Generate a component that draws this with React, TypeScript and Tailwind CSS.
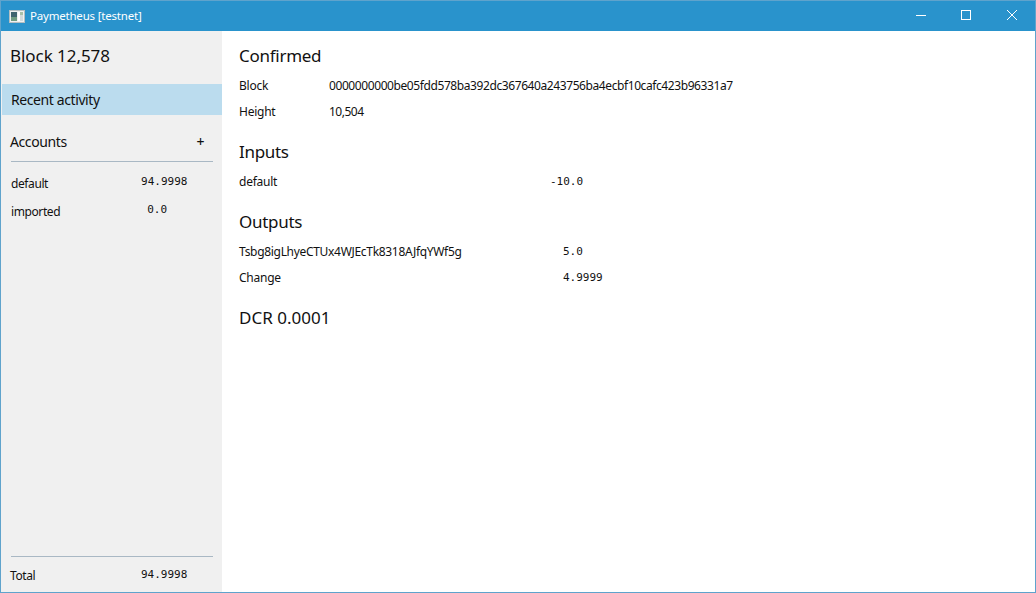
const sans = "font-['Noto_Sans',sans-serif]";
const mono = "font-['DejaVu_Sans_Mono',monospace] text-[11px] leading-[16px] text-[#111]";

const Row = ({ label, children }: { label: string; children: React.ReactNode }) => (
  <div className="flex h-[26px] items-center">
    <span className="w-[90px] shrink-0 text-[12px] tracking-[-0.25px]">{label}</span>
    {children}
  </div>
);

const AmountRow = ({ label, amount, amountClass }: { label: string; amount: string; amountClass: string }) => (
  <div className="flex h-[26px] items-center">
    <span className="text-[12px] tracking-[-0.4px]">{label}</span>
    <span className={`${mono} mb-[4px] ${amountClass}`}>{amount}</span>
  </div>
);

const App = () => {
  return (
    <div className={`${sans} flex h-[593px] w-[1036px] flex-col overflow-hidden border border-[#5fa3cc] bg-white text-[#111]`}>
      <header className="flex h-[30px] shrink-0 items-center bg-[#2993cc] text-white">
        <svg width="16" height="13" viewBox="0 0 16 13" className="ml-[8px]">
          <rect x="0.5" y="0.5" width="15" height="12" fill="#eef1f1" stroke="#b4bfc2" />
          <rect x="2" y="2" width="6" height="5" fill="#3f6570" />
          <rect x="2" y="7" width="6" height="4" fill="#6f9c82" />
          <rect x="9" y="2" width="2" height="9" fill="#ffffff" />
          <rect x="11" y="2" width="3" height="3" fill="#a9c0a8" />
          <rect x="11" y="5" width="3" height="6" fill="#d3dadb" />
        </svg>
        <span className="ml-[5px] text-[11.5px] tracking-[-0.2px]">Paymetheus [testnet]</span>
        <div className="ml-auto flex items-center">
          <svg width="46" height="30" viewBox="0 0 46 30">
            <path d="M 19 14.5 H 29" stroke="white" strokeWidth="1" />
          </svg>
          <svg width="46" height="30" viewBox="0 0 46 30">
            <rect x="18.5" y="9.5" width="9" height="9" fill="none" stroke="white" strokeWidth="1" />
          </svg>
          <svg width="46" height="30" viewBox="0 0 46 30">
            <path d="M 18 9 L 28 19 M 28 9 L 18 19" stroke="white" strokeWidth="1" />
          </svg>
        </div>
      </header>

      <div className="flex min-h-0 flex-1">
        <aside className="flex w-[221px] shrink-0 flex-col bg-[#f0f0f0]">
          <div className="flex h-[53px] shrink-0 items-center pb-[4px] pl-[9px] text-[17px] tracking-[-0.05px]">Block 12,578</div>
          <div className="ml-[1px] flex h-[31px] shrink-0 items-center bg-[#bbdcee] pl-[9px] text-[14px] tracking-[-0.4px]">Recent activity</div>
          <div className="ml-[10px] mr-[9px] mt-[12px] flex h-[35px] shrink-0 items-center justify-between border-b border-[#a9b8c4] pb-[6px] text-[14px] tracking-[-0.4px]">
            <span className="ml-[-1px]">Accounts</span>
            <span className="mr-[9px] text-[14px] font-medium">+</span>
          </div>
          <div className="mx-[10px] mt-[9px] flex flex-col gap-[2px]">
            <AmountRow label="default" amount="94.9998" amountClass="ml-[93px]" />
            <AmountRow label="imported" amount="0.0" amountClass="ml-[87px]" />
          </div>
          <div className="ml-[10px] mr-[9px] mt-auto flex h-[36px] shrink-0 items-center border-t border-[#a9b8c4] pt-[3px]">
            <span className="ml-[-1px] w-[131px] text-[12px] tracking-[-0.4px]">Total</span>
            <span className={`${mono} mb-[2px]`}>94.9998</span>
          </div>
        </aside>

        <main className="flex-1 pl-[17px]">
          <h2 className="mt-[13px] text-[17px] leading-[24px] tracking-[-0.27px]">Confirmed</h2>
          <div className="mt-[5px]">
            <Row label="Block">
              <span className="text-[12px] tracking-[-0.41px]">0000000000be05fdd578ba392dc367640a243756ba4ecbf10cafc423b96331a7</span>
            </Row>
            <Row label="Height">
              <span className="text-[12px] tracking-[-0.5px]">10,504</span>
            </Row>
          </div>
          <h2 className="mt-[15px] text-[17px] leading-[24px] tracking-[-0.3px]">Inputs</h2>
          <div className="mt-[5px]">
            <div className="flex h-[26px] items-center">
              <span className="w-[311px] shrink-0 text-[12px] tracking-[-0.25px]">default</span>
              <span className={mono}>-10.0</span>
            </div>
          </div>
          <h2 className="mt-[15px] text-[17px] leading-[24px] tracking-[-0.3px]">Outputs</h2>
          <div className="mt-[5px]">
            <div className="flex h-[26px] items-center">
              <span className="w-[324px] shrink-0 text-[12px] tracking-[-0.31px]">Tsbg8igLhyeCTUx4WJEcTk8318AJfqYWf5g</span>
              <span className={mono}>5.0</span>
            </div>
            <div className="flex h-[26px] items-center">
              <span className="w-[324px] shrink-0 text-[12px] tracking-[-0.25px]">Change</span>
              <span className={mono}>4.9999</span>
            </div>
          </div>
          <div className="mt-[15px] text-[17px] leading-[24px] tracking-[0.03px]">DCR 0.0001</div>
        </main>
      </div>
    </div>
  );
};

export default App;
